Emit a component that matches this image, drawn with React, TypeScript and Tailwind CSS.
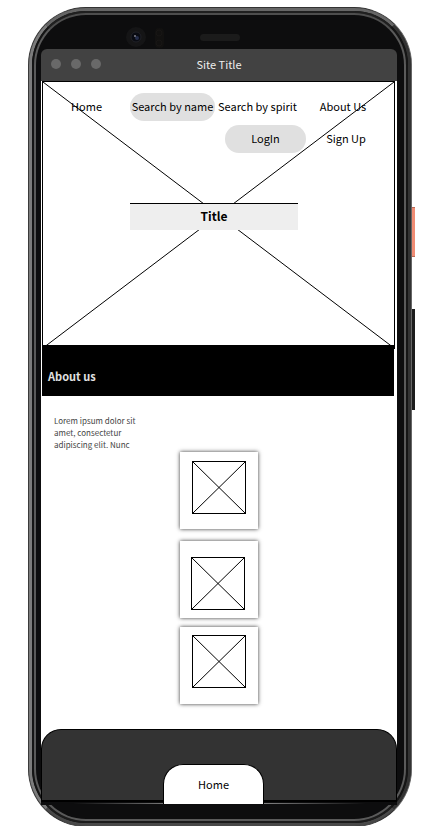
import type { ReactNode } from "react";

function CrossedBox({ className = "" }: { className?: string }) {
  return (
    <svg className={className} viewBox="0 0 100 100" preserveAspectRatio="none" aria-hidden="true">
      <path d="M0 0L100 100M100 0L0 100" stroke="black" strokeWidth="1" vectorEffect="non-scaling-stroke" />
    </svg>
  );
}

function Card({ className }: { className: string }) {
  return (
    <article className={`h-[77px] w-[78px] bg-white shadow-[0_0_4px_rgba(0,0,0,0.8)] ${className}`}>
      <CrossedBox className="h-[53px] w-[54px] border border-black" />
    </article>
  );
}

function NavButton({ children, active = false }: { children: string; active?: boolean }) {
  return (
    <button
      type="button"
      className={`h-7 rounded-full pb-0.5 text-center whitespace-nowrap ${active ? "bg-[#e0e0e0]" : ""}`}
    >
      {children}
    </button>
  );
}

function TitleBar() {
  return (
    <header className="relative flex h-8 items-center justify-center rounded-t-md bg-[#424242] pb-0.5 text-[11px] text-[#eeeeee]">
      <div className="absolute top-[10px] left-[10px] flex gap-[10px]">
        <span className="size-[10px] rounded-full bg-[#696969]" />
        <span className="size-[10px] rounded-full bg-[#696969]" />
        <span className="size-[10px] rounded-full bg-[#696969]" />
      </div>
      <h1>Site Title</h1>
    </header>
  );
}

function Hero() {
  return (
    <section className="relative mr-[2px] ml-px h-[268px] border border-black">
      <CrossedBox className="absolute inset-0 size-full" />
      <nav className="relative flex flex-col gap-1 pt-[11px] pr-2 text-[11px]">
        <div className="grid grid-cols-[87px_85px_85px_1fr]">
          <NavButton>Home</NavButton>
          <NavButton active>Search by name</NavButton>
          <NavButton>Search by spirit</NavButton>
          <NavButton>About Us</NavButton>
        </div>
        <div className="grid grid-cols-[81px_1fr] pl-[182px]">
          <NavButton active>LogIn</NavButton>
          <NavButton>Sign Up</NavButton>
        </div>
      </nav>
      <h2 className="relative mt-[50px] ml-[87px] h-[27px] w-[168px] border-t border-black bg-[#eeeeee] text-center text-xs leading-6 font-bold">
        Title
      </h2>
    </section>
  );
}

function Footer() {
  return (
    <footer>
      <div className="flex h-[73px] rounded-t-[20px] border border-b-2 border-black bg-[#333333] pt-[34px]">
        <button
          type="button"
          className="relative ml-[121px] h-10 w-[101px] rounded-t-[20px] border border-b-0 border-black bg-white text-[11px]"
        >
          Home
        </button>
      </div>
      <div className="bg-[#0d0d0e] px-8 pt-px pb-px">
        <div className="h-px bg-linear-to-r from-transparent via-[#b5b5b5] to-transparent" />
      </div>
    </footer>
  );
}

function Camera() {
  return (
    <svg className="absolute top-[19px] left-24 h-[22px] w-12" viewBox="0 0 48 22" aria-hidden="true">
      <circle cx="11" cy="10" r="10" fill="#151516" />
      <circle cx="11" cy="10" r="5" fill="#090b12" stroke="#202127" />
      <circle cx="12" cy="11" r="2" fill="#252e4b" />
      <circle cx="10" cy="9" r="1" fill="#80828d" />
      <rect x="30" y="1" width="9" height="20" rx="4" fill="#121110" />
      <circle cx="34" cy="6" r="3" fill="none" stroke="#181615" />
      <circle cx="34" cy="16" r="3" fill="none" stroke="#181615" />
    </svg>
  );
}

function Phone({ children }: { children: ReactNode }) {
  return (
    <div className="relative rounded-[58px] border border-t-[#333333] border-r-[#666666] border-b-[#333333] border-l-[#3a3a3a] bg-[#333333]">
      <span className="absolute top-[199px] -right-1 h-[50px] w-[3px] border-y border-[#b96a56] bg-[#f08c74]" />
      <span className="absolute top-[301px] -right-1 h-[101px] w-[3px] bg-[#1c1c1c]" />
      <div className="rounded-[57px] border-3 border-t-[#666666] border-r-[#333333] border-b-[#484848] border-l-[#7c7c7c] bg-[#111111]">
        <div className="rounded-[54px] border-2 border-t-[#202020] border-r-[#151515] border-b-[#1c1c1c] border-l-[#151515] bg-[#111111]">
          <div className="rounded-[52px] border-2 border-t-[#4e4e4e] border-r-[#5a5a5a] border-b-[#5a5a5a] border-l-[#5a5a5a] bg-[#0d0d0e] pt-[34px] pr-[7px] pb-[14px] pl-[5px]">
            {children}
          </div>
        </div>
      </div>
      <Camera />
      <span className="absolute top-[26px] left-[171px] h-[7px] w-10 rounded-full bg-[#1b1b1b]" />
    </div>
  );
}

export default function App() {
  return (
    <div className="pt-[7px] pr-[9px] pl-7 font-['Noto_Sans_CJK_SC',sans-serif] text-black">
      <Phone>
        <TitleBar />
        <div className="bg-white">
          <main>
            <Hero />
            <h2 className="relative -mt-1 mr-[3px] ml-px h-[51px] bg-black pt-[22px] pl-[6px] text-[11px] leading-[18px] font-bold text-[#e0e0e0]">
              About us
            </h2>
            <section className="pt-[19px] pb-[25px]">
              <p className="w-[110px] pl-[13px] text-[8px] leading-3 text-[#444444]">
                Lorem ipsum dolor sit amet, consectetur adipiscing elit. Nunc
              </p>
              <div className="flex flex-col items-center pt-px">
                <Card className="pt-[9px] pl-3" />
                <Card className="mt-3 pt-4 pl-[11px]" />
                <Card className="mt-[9px] pt-2 pl-3" />
              </div>
            </section>
          </main>
          <Footer />
        </div>
      </Phone>
    </div>
  );
}
